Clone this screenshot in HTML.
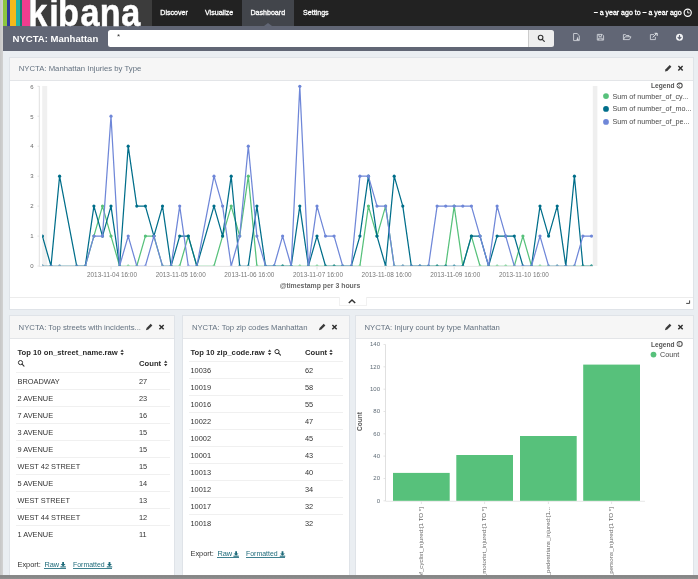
<!DOCTYPE html>
<html><head><meta charset="utf-8"><title>Kibana</title>
<style>
html,body{margin:0;padding:0;}
body{width:698px;height:579px;overflow:hidden;position:relative;background:#eaeef2;font-family:"Liberation Sans",sans-serif;color:#444;}
div{position:absolute;box-sizing:border-box;}
.panel{background:#fff;border:1px solid #dfe3e8;}
.ph{background:#f6f6f6;border-bottom:1px solid #e3e5e8;left:0;right:0;top:0;}
.pt{font-size:7.72px;color:#647280;white-space:nowrap;line-height:10px;}
.td{font-size:7.4px;line-height:10px;white-space:nowrap;color:#333;}
.th{font-size:7.66px;line-height:10px;white-space:nowrap;color:#2b2b2b;font-weight:bold;}
.ln{height:1px;background:#f0f0f0;}
.nav{font-size:7.1px;font-weight:normal;-webkit-text-stroke:0.3px #fff;color:#fff;line-height:10px;white-space:nowrap;}
svg{position:absolute;left:0;top:0;}
#wrap{left:0;top:0;width:698px;height:579px;will-change:transform;overflow:hidden;}
svg text{font-family:"Liberation Sans",sans-serif;}
a{color:#1f6b7a;text-decoration:underline;}
</style></head><body><div id="wrap">
<!-- navbar -->
<div style="left:0;top:0;width:698px;height:26px;background:#222;"></div>
<div style="left:3px;top:0;width:148.5px;height:26px;background:#3c3c3c;"></div>
<div style="left:3px;top:0;width:4px;height:26px;background:#8cc63f;"></div>
<div style="left:7px;top:0;width:3.2px;height:26px;background:#2e3a9c;"></div>
<div style="left:10.4px;top:0;width:5.2px;height:26px;background:#f5b91a;"></div>
<div style="left:15.6px;top:0;width:4.4px;height:26px;background:#25b4a4;"></div>
<div style="left:20px;top:0;width:1.8px;height:26px;background:#157a70;"></div>
<div style="left:22px;top:0;width:7.6px;height:26px;background:#ee3d8f;"></div>
<svg width="698" height="60" style="z-index:3"><g font-size="38" font-weight="bold" fill="#fff" stroke="#fff" stroke-width="0.5"><text transform="translate(28.3,25.5) scale(0.9,1)">k</text><text transform="translate(49.2,25.5) scale(0.9,1)">i</text><text transform="translate(58.1,25.5) scale(0.9,1)">b</text><text transform="translate(80.4,25.5) scale(0.9,1)">a</text><text transform="translate(99.8,25.5) scale(0.9,1)">n</text><text transform="translate(121.3,25.5) scale(0.9,1)">a</text></g></svg>
<div style="left:242.3px;top:0;width:51.8px;height:26px;background:#42454b;"></div>
<div style="left:263.7px;top:22.6px;width:0;height:0;border-left:4.1px solid transparent;border-right:4.1px solid transparent;border-bottom:3.6px solid #616675;"></div>
<div class="nav" style="left:160.3px;top:7.6px;">Discover</div>
<div class="nav" style="left:205px;top:7.6px;">Visualize</div>
<div class="nav" style="left:250.4px;top:7.6px;">Dashboard</div>
<div class="nav" style="left:303px;top:7.6px;">Settings</div>
<div class="nav" style="right:16.4px;top:7.6px;font-size:7px;">~ a year ago to ~ a year ago</div>
<svg width="698" height="60" style="z-index:3"><circle cx="687.7" cy="12.7" r="3.6" fill="none" stroke="#fff" stroke-width="1.15"/><path d="M687.7 10.5V12.9H689.6" fill="none" stroke="#fff" stroke-width="0.9"/></svg>
<!-- subnav -->
<div style="left:0;top:26px;width:698px;height:24.7px;background:#616675;"></div>
<div style="left:12.5px;top:33px;font-size:9.55px;font-weight:bold;color:#fff;line-height:12px;white-space:nowrap;">NYCTA: Manhattan</div>
<div style="left:107.5px;top:30px;width:420px;height:17.4px;background:#fff;border-radius:2.5px 0 0 2.5px;"></div>
<div style="left:117px;top:31.5px;font-size:8px;color:#333;line-height:10px;">*</div>
<div style="left:527.5px;top:30px;width:26px;height:17.4px;background:#eee;border-left:1px solid #ccc;border-radius:0 2.5px 2.5px 0;"></div>
<svg width="698" height="60" style="z-index:3">
<circle cx="540.6" cy="37.6" r="2.3" fill="none" stroke="#333" stroke-width="1.1"/><line x1="542.3" y1="39.4" x2="544.3" y2="41.4" stroke="#333" stroke-width="1.2" stroke-linecap="round"/>
<g fill="none" stroke="#d6d9df" stroke-width="0.85">
<path d="M573.6 33.5h3.5l2.2 2.2v4.9h-5.7z"/><path d="M577.6 37.4v2.6M576.5 38.9l1.1 1.1 1.1-1.1" stroke="#eceef1"/>
<path d="M597.3 34.4h4.9l1.4 1.4v4.3h-6.3z"/><path d="M598.9 34.4v2h2.6v-2M598.7 40.1v-2h3.5v2"/>
<path d="M623.4 39.6v-5h2.1l.7.9h2.8v1.3"/><path d="M623.4 39.6l1.6-2.8h6l-1.6 2.8z"/>
<path d="M654 34.6h-3.6v5h5v-2.6"/><path d="M652.8 37.4l4-4M654.6 33.3h2.6v2.6" stroke="#eceef1" stroke-width="1"/>
</g>
<circle cx="679.5" cy="37.2" r="3.5" fill="#f4f5f7"/><path d="M679.5 35v3.4M677.7 37l1.8 1.9 1.8-1.9" fill="none" stroke="#616675" stroke-width="1.1"/>
</svg>

<!-- panel 1 -->
<div class="panel" style="left:9px;top:57.3px;width:685px;height:253px;">
 <div class="ph" style="height:22.4px;"></div>
 <div class="pt" style="left:8.8px;top:5.9px;">NYCTA: Manhattan Injuries by Type</div>
 <div style="left:0;right:0;top:239px;height:1px;background:#ececec;"></div>
 <div style="left:329px;top:238.5px;width:28px;height:9px;background:#fff;border:1px solid #f1f1f1;border-top:none;"></div>
</div>
<!-- panel 2 -->
<div class="panel" style="left:9px;top:315.4px;width:166px;height:270px;">
 <div class="ph" style="height:22.4px;"></div>
 <div class="pt" style="left:8.6px;top:6.4px;">NYCTA: Top streets with incidents...</div>
</div>
<!-- panel 3 -->
<div class="panel" style="left:182.3px;top:315.4px;width:167.8px;height:270px;">
 <div class="ph" style="height:22.4px;"></div>
 <div class="pt" style="left:8.6px;top:6.4px;">NYCTA: Top zip codes Manhattan</div>
</div>
<!-- panel 4 -->
<div class="panel" style="left:354.9px;top:315.4px;width:339.2px;height:270px;">
 <div class="ph" style="height:22.4px;"></div>
 <div class="pt" style="left:8.6px;top:6.4px;">NYCTA: Injury count by type Manhattan</div>
</div>

<!-- table 1 -->
<div class="th" style="left:17.5px;top:347.7px;">Top 10 on_street_name.raw</div>
<div class="th" style="left:139px;top:358.7px;">Count</div>
<div class="ln" style="left:15.5px;width:154.5px;top:372px"></div><div class="td" style="left:17.5px;top:376.9px">BROADWAY</div><div class="td" style="left:139px;top:376.9px">27</div><div class="ln" style="left:15.5px;width:154.5px;top:389px"></div><div class="td" style="left:17.5px;top:393.9px">2 AVENUE</div><div class="td" style="left:139px;top:393.9px">23</div><div class="ln" style="left:15.5px;width:154.5px;top:406px"></div><div class="td" style="left:17.5px;top:410.9px">7 AVENUE</div><div class="td" style="left:139px;top:410.9px">16</div><div class="ln" style="left:15.5px;width:154.5px;top:423px"></div><div class="td" style="left:17.5px;top:427.9px">3 AVENUE</div><div class="td" style="left:139px;top:427.9px">15</div><div class="ln" style="left:15.5px;width:154.5px;top:440px"></div><div class="td" style="left:17.5px;top:444.9px">9 AVENUE</div><div class="td" style="left:139px;top:444.9px">15</div><div class="ln" style="left:15.5px;width:154.5px;top:457px"></div><div class="td" style="left:17.5px;top:461.9px">WEST 42 STREET</div><div class="td" style="left:139px;top:461.9px">15</div><div class="ln" style="left:15.5px;width:154.5px;top:474px"></div><div class="td" style="left:17.5px;top:478.9px">5 AVENUE</div><div class="td" style="left:139px;top:478.9px">14</div><div class="ln" style="left:15.5px;width:154.5px;top:491px"></div><div class="td" style="left:17.5px;top:495.9px">WEST STREET</div><div class="td" style="left:139px;top:495.9px">13</div><div class="ln" style="left:15.5px;width:154.5px;top:508px"></div><div class="td" style="left:17.5px;top:512.9px">WEST 44 STREET</div><div class="td" style="left:139px;top:512.9px">12</div><div class="ln" style="left:15.5px;width:154.5px;top:525px"></div><div class="td" style="left:17.5px;top:529.9px">1 AVENUE</div><div class="td" style="left:139px;top:529.9px">11</div>
<div class="td" style="left:17.5px;top:559.6px;">Export:</div><div class="td" style="left:44.4px;top:559.6px;color:#1f6b7a">Raw</div><div class="td" style="left:73.0px;top:559.6px;color:#1f6b7a;font-size:6.95px">Formatted</div><div style="left:44.4px;top:568.1px;width:21.6px;height:0.8px;background:#3f8190"></div><div style="left:73.0px;top:568.1px;width:39.2px;height:0.8px;background:#3f8190"></div><svg width="698" height="579" style="z-index:3"><path d="M62.2 561.9h1.8v2.2h1.5l-2.4 2.3l-2.4 -2.3h1.5z" fill="#1f6b7a"/><path d="M60.4 566.9h5.4" stroke="#1f6b7a" stroke-width="1.1"/><path d="M108.6 561.9h1.8v2.2h1.5l-2.4 2.3l-2.4 -2.3h1.5z" fill="#1f6b7a"/><path d="M106.8 566.9h5.4" stroke="#1f6b7a" stroke-width="1.1"/></svg>
<!-- table 2 -->
<div class="th" style="left:190.5px;top:347.7px;">Top 10 zip_code.raw</div>
<div class="th" style="left:305px;top:347.7px;">Count</div>
<div class="ln" style="left:188.5px;width:154.5px;top:361px"></div><div class="td" style="left:190.5px;top:365.9px">10036</div><div class="td" style="left:305px;top:365.9px">62</div><div class="ln" style="left:188.5px;width:154.5px;top:378px"></div><div class="td" style="left:190.5px;top:382.9px">10019</div><div class="td" style="left:305px;top:382.9px">58</div><div class="ln" style="left:188.5px;width:154.5px;top:395px"></div><div class="td" style="left:190.5px;top:399.9px">10016</div><div class="td" style="left:305px;top:399.9px">55</div><div class="ln" style="left:188.5px;width:154.5px;top:412px"></div><div class="td" style="left:190.5px;top:416.9px">10022</div><div class="td" style="left:305px;top:416.9px">47</div><div class="ln" style="left:188.5px;width:154.5px;top:429px"></div><div class="td" style="left:190.5px;top:433.9px">10002</div><div class="td" style="left:305px;top:433.9px">45</div><div class="ln" style="left:188.5px;width:154.5px;top:446px"></div><div class="td" style="left:190.5px;top:450.9px">10001</div><div class="td" style="left:305px;top:450.9px">43</div><div class="ln" style="left:188.5px;width:154.5px;top:463px"></div><div class="td" style="left:190.5px;top:467.9px">10013</div><div class="td" style="left:305px;top:467.9px">40</div><div class="ln" style="left:188.5px;width:154.5px;top:480px"></div><div class="td" style="left:190.5px;top:484.9px">10012</div><div class="td" style="left:305px;top:484.9px">34</div><div class="ln" style="left:188.5px;width:154.5px;top:497px"></div><div class="td" style="left:190.5px;top:501.9px">10017</div><div class="td" style="left:305px;top:501.9px">32</div><div class="ln" style="left:188.5px;width:154.5px;top:514px"></div><div class="td" style="left:190.5px;top:518.9px">10018</div><div class="td" style="left:305px;top:518.9px">32</div>
<div class="td" style="left:190.5px;top:548.9px;">Export:</div><div class="td" style="left:217.4px;top:548.9px;color:#1f6b7a">Raw</div><div class="td" style="left:246.0px;top:548.9px;color:#1f6b7a;font-size:6.95px">Formatted</div><div style="left:217.4px;top:557.4px;width:21.6px;height:0.8px;background:#3f8190"></div><div style="left:246.0px;top:557.4px;width:39.2px;height:0.8px;background:#3f8190"></div><svg width="698" height="579" style="z-index:3"><path d="M235.2 551.2h1.8v2.2h1.5l-2.4 2.3l-2.4 -2.3h1.5z" fill="#1f6b7a"/><path d="M233.4 556.2h5.4" stroke="#1f6b7a" stroke-width="1.1"/><path d="M281.6 551.2h1.8v2.2h1.5l-2.4 2.3l-2.4 -2.3h1.5z" fill="#1f6b7a"/><path d="M279.8 556.2h5.4" stroke="#1f6b7a" stroke-width="1.1"/></svg>

<svg width="698" height="579" style="z-index:2">
<!-- line chart -->
<rect x="42.2" y="86" width="5" height="180" fill="#f0f0f0"/>
<rect x="592.8" y="86" width="4.6" height="180" fill="#efefef"/>
<line x1="39.3" x2="39.3" y1="86" y2="266.5" stroke="#ddd" stroke-width="0.9"/>
<line x1="39.3" x2="593" y1="266.4" y2="266.4" stroke="#e2e2e2" stroke-width="0.9"/>
<line x1="37.5" x2="39.3" y1="266.0" y2="266.0" stroke="#ddd" stroke-width="0.8"/><line x1="37.5" x2="39.3" y1="236.1" y2="236.1" stroke="#ddd" stroke-width="0.8"/><line x1="37.5" x2="39.3" y1="206.1" y2="206.1" stroke="#ddd" stroke-width="0.8"/><line x1="37.5" x2="39.3" y1="176.2" y2="176.2" stroke="#ddd" stroke-width="0.8"/><line x1="37.5" x2="39.3" y1="146.2" y2="146.2" stroke="#ddd" stroke-width="0.8"/><line x1="37.5" x2="39.3" y1="116.2" y2="116.2" stroke="#ddd" stroke-width="0.8"/><line x1="37.5" x2="39.3" y1="86.3" y2="86.3" stroke="#ddd" stroke-width="0.8"/>
<g font-size="6" fill="#6a6a6a"><text x="33.6" y="268.2" text-anchor="end">0</text><text x="33.6" y="238.2" text-anchor="end">1</text><text x="33.6" y="208.3" text-anchor="end">2</text><text x="33.6" y="178.3" text-anchor="end">3</text><text x="33.6" y="148.4" text-anchor="end">4</text><text x="33.6" y="118.5" text-anchor="end">5</text><text x="33.6" y="88.5" text-anchor="end">6</text></g>
<g font-size="6.4" fill="#777"><text x="112.0" y="277" text-anchor="middle">2013-11-04 16:00</text><line x1="111.0" x2="111.0" y1="267" y2="269.5" stroke="#ddd" stroke-width="0.8"/><text x="180.7" y="277" text-anchor="middle">2013-11-05 16:00</text><line x1="179.7" x2="179.7" y1="267" y2="269.5" stroke="#ddd" stroke-width="0.8"/><text x="249.3" y="277" text-anchor="middle">2013-11-06 16:00</text><line x1="248.3" x2="248.3" y1="267" y2="269.5" stroke="#ddd" stroke-width="0.8"/><text x="318.0" y="277" text-anchor="middle">2013-11-07 16:00</text><line x1="317.0" x2="317.0" y1="267" y2="269.5" stroke="#ddd" stroke-width="0.8"/><text x="386.6" y="277" text-anchor="middle">2013-11-08 16:00</text><line x1="385.6" x2="385.6" y1="267" y2="269.5" stroke="#ddd" stroke-width="0.8"/><text x="455.2" y="277" text-anchor="middle">2013-11-09 16:00</text><line x1="454.2" x2="454.2" y1="267" y2="269.5" stroke="#ddd" stroke-width="0.8"/><text x="523.9" y="277" text-anchor="middle">2013-11-10 16:00</text><line x1="522.9" x2="522.9" y1="267" y2="269.5" stroke="#ddd" stroke-width="0.8"/></g>
<text x="320" y="288" font-size="6.9" font-weight="bold" fill="#686868" text-anchor="middle">@timestamp per 3 hours</text>
<clipPath id="cc"><rect x="42.2" y="80" width="551" height="185.6"/></clipPath><g clip-path="url(#cc)"><path d="M42.4,266.0 L51.0,266.0 L59.6,266.0 L76.7,266.0 L85.3,266.0 L93.9,236.1 L102.5,206.1 L111.0,236.1 L119.6,266.0 L128.2,266.0 L136.8,266.0 L145.4,236.1 L153.9,236.1 L162.5,266.0 L171.1,266.0 L179.7,266.0 L188.3,236.1 L196.8,266.0 L214.0,266.0 L222.6,236.1 L231.2,206.1 L239.7,236.1 L248.3,176.2 L256.9,266.0 L265.5,266.0 L274.1,266.0 L282.6,266.0 L291.2,266.0 L299.8,266.0 L308.4,266.0 L317.0,266.0 L325.5,266.0 L334.1,266.0 L342.7,266.0 L351.3,266.0 L359.9,266.0 L368.4,206.1 L377.0,236.1 L385.6,206.1 L394.2,266.0 L402.8,266.0 L411.3,266.0 L419.9,266.0 L428.5,266.0 L437.1,266.0 L445.7,266.0 L454.2,206.1 L462.8,266.0 L471.4,236.1 L480.0,266.0 L488.6,266.0 L497.1,266.0 L505.7,266.0 L514.3,266.0 L522.9,236.1 L531.5,266.0 L540.0,266.0 L548.6,266.0 L557.2,266.0 L565.8,266.0 L574.4,266.0 L582.9,266.0 L591.5,266.0" fill="none" stroke="#57c17b" stroke-width="1.25" stroke-linejoin="round"/><circle cx="42.4" cy="266.0" r="1.5" fill="#57c17b"/><circle cx="51.0" cy="266.0" r="1.5" fill="#57c17b"/><circle cx="59.6" cy="266.0" r="1.5" fill="#57c17b"/><circle cx="76.7" cy="266.0" r="1.5" fill="#57c17b"/><circle cx="85.3" cy="266.0" r="1.5" fill="#57c17b"/><circle cx="93.9" cy="236.1" r="1.6" fill="#57c17b"/><circle cx="102.5" cy="206.1" r="1.6" fill="#57c17b"/><circle cx="111.0" cy="236.1" r="1.6" fill="#57c17b"/><circle cx="119.6" cy="266.0" r="1.5" fill="#57c17b"/><circle cx="128.2" cy="266.0" r="1.5" fill="#57c17b"/><circle cx="136.8" cy="266.0" r="1.5" fill="#57c17b"/><circle cx="145.4" cy="236.1" r="1.6" fill="#57c17b"/><circle cx="153.9" cy="236.1" r="1.6" fill="#57c17b"/><circle cx="162.5" cy="266.0" r="1.5" fill="#57c17b"/><circle cx="171.1" cy="266.0" r="1.5" fill="#57c17b"/><circle cx="179.7" cy="266.0" r="1.5" fill="#57c17b"/><circle cx="188.3" cy="236.1" r="1.6" fill="#57c17b"/><circle cx="196.8" cy="266.0" r="1.5" fill="#57c17b"/><circle cx="214.0" cy="266.0" r="1.5" fill="#57c17b"/><circle cx="222.6" cy="236.1" r="1.6" fill="#57c17b"/><circle cx="231.2" cy="206.1" r="1.6" fill="#57c17b"/><circle cx="239.7" cy="236.1" r="1.6" fill="#57c17b"/><circle cx="248.3" cy="176.2" r="1.6" fill="#57c17b"/><circle cx="256.9" cy="266.0" r="1.5" fill="#57c17b"/><circle cx="265.5" cy="266.0" r="1.5" fill="#57c17b"/><circle cx="274.1" cy="266.0" r="1.5" fill="#57c17b"/><circle cx="282.6" cy="266.0" r="1.5" fill="#57c17b"/><circle cx="291.2" cy="266.0" r="1.5" fill="#57c17b"/><circle cx="299.8" cy="266.0" r="1.5" fill="#57c17b"/><circle cx="308.4" cy="266.0" r="1.5" fill="#57c17b"/><circle cx="317.0" cy="266.0" r="1.5" fill="#57c17b"/><circle cx="325.5" cy="266.0" r="1.5" fill="#57c17b"/><circle cx="334.1" cy="266.0" r="1.5" fill="#57c17b"/><circle cx="342.7" cy="266.0" r="1.5" fill="#57c17b"/><circle cx="351.3" cy="266.0" r="1.5" fill="#57c17b"/><circle cx="359.9" cy="266.0" r="1.5" fill="#57c17b"/><circle cx="368.4" cy="206.1" r="1.6" fill="#57c17b"/><circle cx="377.0" cy="236.1" r="1.6" fill="#57c17b"/><circle cx="385.6" cy="206.1" r="1.6" fill="#57c17b"/><circle cx="394.2" cy="266.0" r="1.5" fill="#57c17b"/><circle cx="402.8" cy="266.0" r="1.5" fill="#57c17b"/><circle cx="411.3" cy="266.0" r="1.5" fill="#57c17b"/><circle cx="419.9" cy="266.0" r="1.5" fill="#57c17b"/><circle cx="428.5" cy="266.0" r="1.5" fill="#57c17b"/><circle cx="437.1" cy="266.0" r="1.5" fill="#57c17b"/><circle cx="445.7" cy="266.0" r="1.5" fill="#57c17b"/><circle cx="454.2" cy="206.1" r="1.6" fill="#57c17b"/><circle cx="462.8" cy="266.0" r="1.5" fill="#57c17b"/><circle cx="471.4" cy="236.1" r="1.6" fill="#57c17b"/><circle cx="480.0" cy="266.0" r="1.5" fill="#57c17b"/><circle cx="488.6" cy="266.0" r="1.5" fill="#57c17b"/><circle cx="497.1" cy="266.0" r="1.5" fill="#57c17b"/><circle cx="505.7" cy="266.0" r="1.5" fill="#57c17b"/><circle cx="514.3" cy="266.0" r="1.5" fill="#57c17b"/><circle cx="522.9" cy="236.1" r="1.6" fill="#57c17b"/><circle cx="531.5" cy="266.0" r="1.5" fill="#57c17b"/><circle cx="540.0" cy="266.0" r="1.5" fill="#57c17b"/><circle cx="548.6" cy="266.0" r="1.5" fill="#57c17b"/><circle cx="557.2" cy="266.0" r="1.5" fill="#57c17b"/><circle cx="565.8" cy="266.0" r="1.5" fill="#57c17b"/><circle cx="574.4" cy="266.0" r="1.5" fill="#57c17b"/><circle cx="582.9" cy="266.0" r="1.5" fill="#57c17b"/><circle cx="591.5" cy="266.0" r="1.5" fill="#57c17b"/><path d="M42.4,236.1 L51.0,266.0 L59.6,176.2 L76.7,266.0 L85.3,266.0 L93.9,206.1 L102.5,236.1 L111.0,206.1 L119.6,266.0 L128.2,146.2 L136.8,206.1 L145.4,206.1 L153.9,236.1 L162.5,206.1 L171.1,266.0 L179.7,236.1 L188.3,236.1 L196.8,266.0 L214.0,206.1 L222.6,236.1 L231.2,176.2 L239.7,266.0 L248.3,266.0 L256.9,206.1 L265.5,266.0 L274.1,266.0 L282.6,266.0 L291.2,266.0 L299.8,206.1 L308.4,266.0 L317.0,236.1 L325.5,266.0 L334.1,266.0 L342.7,266.0 L351.3,266.0 L359.9,236.1 L368.4,176.2 L377.0,236.1 L385.6,266.0 L394.2,176.2 L402.8,206.1 L411.3,266.0 L419.9,266.0 L428.5,266.0 L437.1,266.0 L445.7,266.0 L454.2,266.0 L462.8,266.0 L471.4,236.1 L480.0,236.1 L488.6,266.0 L497.1,236.1 L505.7,236.1 L514.3,236.1 L522.9,266.0 L531.5,266.0 L540.0,206.1 L548.6,236.1 L557.2,206.1 L565.8,266.0 L574.4,176.2 L582.9,266.0 L591.5,266.0" fill="none" stroke="#006e8a" stroke-width="1.25" stroke-linejoin="round"/><circle cx="42.4" cy="236.1" r="1.6" fill="#006e8a"/><circle cx="51.0" cy="266.0" r="1.5" fill="#006e8a"/><circle cx="59.6" cy="176.2" r="1.6" fill="#006e8a"/><circle cx="76.7" cy="266.0" r="1.5" fill="#006e8a"/><circle cx="85.3" cy="266.0" r="1.5" fill="#006e8a"/><circle cx="93.9" cy="206.1" r="1.6" fill="#006e8a"/><circle cx="102.5" cy="236.1" r="1.6" fill="#006e8a"/><circle cx="111.0" cy="206.1" r="1.6" fill="#006e8a"/><circle cx="119.6" cy="266.0" r="1.5" fill="#006e8a"/><circle cx="128.2" cy="146.2" r="1.6" fill="#006e8a"/><circle cx="136.8" cy="206.1" r="1.6" fill="#006e8a"/><circle cx="145.4" cy="206.1" r="1.6" fill="#006e8a"/><circle cx="153.9" cy="236.1" r="1.6" fill="#006e8a"/><circle cx="162.5" cy="206.1" r="1.6" fill="#006e8a"/><circle cx="171.1" cy="266.0" r="1.5" fill="#006e8a"/><circle cx="179.7" cy="236.1" r="1.6" fill="#006e8a"/><circle cx="188.3" cy="236.1" r="1.6" fill="#006e8a"/><circle cx="196.8" cy="266.0" r="1.5" fill="#006e8a"/><circle cx="214.0" cy="206.1" r="1.6" fill="#006e8a"/><circle cx="222.6" cy="236.1" r="1.6" fill="#006e8a"/><circle cx="231.2" cy="176.2" r="1.6" fill="#006e8a"/><circle cx="239.7" cy="266.0" r="1.5" fill="#006e8a"/><circle cx="248.3" cy="266.0" r="1.5" fill="#006e8a"/><circle cx="256.9" cy="206.1" r="1.6" fill="#006e8a"/><circle cx="265.5" cy="266.0" r="1.5" fill="#006e8a"/><circle cx="274.1" cy="266.0" r="1.5" fill="#006e8a"/><circle cx="282.6" cy="266.0" r="1.5" fill="#006e8a"/><circle cx="291.2" cy="266.0" r="1.5" fill="#006e8a"/><circle cx="299.8" cy="206.1" r="1.6" fill="#006e8a"/><circle cx="308.4" cy="266.0" r="1.5" fill="#006e8a"/><circle cx="317.0" cy="236.1" r="1.6" fill="#006e8a"/><circle cx="325.5" cy="266.0" r="1.5" fill="#006e8a"/><circle cx="334.1" cy="266.0" r="1.5" fill="#006e8a"/><circle cx="342.7" cy="266.0" r="1.5" fill="#006e8a"/><circle cx="351.3" cy="266.0" r="1.5" fill="#006e8a"/><circle cx="359.9" cy="236.1" r="1.6" fill="#006e8a"/><circle cx="368.4" cy="176.2" r="1.6" fill="#006e8a"/><circle cx="377.0" cy="236.1" r="1.6" fill="#006e8a"/><circle cx="385.6" cy="266.0" r="1.5" fill="#006e8a"/><circle cx="394.2" cy="176.2" r="1.6" fill="#006e8a"/><circle cx="402.8" cy="206.1" r="1.6" fill="#006e8a"/><circle cx="411.3" cy="266.0" r="1.5" fill="#006e8a"/><circle cx="419.9" cy="266.0" r="1.5" fill="#006e8a"/><circle cx="428.5" cy="266.0" r="1.5" fill="#006e8a"/><circle cx="437.1" cy="266.0" r="1.5" fill="#006e8a"/><circle cx="445.7" cy="266.0" r="1.5" fill="#006e8a"/><circle cx="454.2" cy="266.0" r="1.5" fill="#006e8a"/><circle cx="462.8" cy="266.0" r="1.5" fill="#006e8a"/><circle cx="471.4" cy="236.1" r="1.6" fill="#006e8a"/><circle cx="480.0" cy="236.1" r="1.6" fill="#006e8a"/><circle cx="488.6" cy="266.0" r="1.5" fill="#006e8a"/><circle cx="497.1" cy="236.1" r="1.6" fill="#006e8a"/><circle cx="505.7" cy="236.1" r="1.6" fill="#006e8a"/><circle cx="514.3" cy="236.1" r="1.6" fill="#006e8a"/><circle cx="522.9" cy="266.0" r="1.5" fill="#006e8a"/><circle cx="531.5" cy="266.0" r="1.5" fill="#006e8a"/><circle cx="540.0" cy="206.1" r="1.6" fill="#006e8a"/><circle cx="548.6" cy="236.1" r="1.6" fill="#006e8a"/><circle cx="557.2" cy="206.1" r="1.6" fill="#006e8a"/><circle cx="565.8" cy="266.0" r="1.5" fill="#006e8a"/><circle cx="574.4" cy="176.2" r="1.6" fill="#006e8a"/><circle cx="582.9" cy="266.0" r="1.5" fill="#006e8a"/><circle cx="591.5" cy="266.0" r="1.5" fill="#006e8a"/><path d="M42.4,266.0 L51.0,266.0 L59.6,266.0 L76.7,266.0 L85.3,266.0 L93.9,236.1 L102.5,236.1 L111.0,116.2 L119.6,266.0 L128.2,236.1 L136.8,266.0 L145.4,266.0 L153.9,236.1 L162.5,266.0 L171.1,266.0 L179.7,206.1 L188.3,266.0 L196.8,266.0 L214.0,176.2 L222.6,206.1 L231.2,266.0 L239.7,236.1 L248.3,146.2 L256.9,236.1 L265.5,266.0 L274.1,266.0 L282.6,236.1 L291.2,266.0 L299.8,86.3 L308.4,266.0 L317.0,206.1 L325.5,236.1 L334.1,236.1 L342.7,266.0 L351.3,266.0 L359.9,176.2 L368.4,176.2 L377.0,206.1 L385.6,206.1 L394.2,266.0 L402.8,266.0 L411.3,266.0 L419.9,266.0 L428.5,266.0 L437.1,206.1 L445.7,206.1 L454.2,206.1 L462.8,206.1 L471.4,206.1 L480.0,236.1 L488.6,266.0 L497.1,206.1 L505.7,236.1 L514.3,266.0 L522.9,266.0 L531.5,266.0 L540.0,236.1 L548.6,266.0 L557.2,266.0 L565.8,266.0 L574.4,266.0 L582.9,236.1 L591.5,236.1" fill="none" stroke="#6f87d8" stroke-width="1.25" stroke-linejoin="round"/><circle cx="42.4" cy="266.0" r="1.5" fill="#6f87d8"/><circle cx="51.0" cy="266.0" r="1.5" fill="#6f87d8"/><circle cx="59.6" cy="266.0" r="1.5" fill="#6f87d8"/><circle cx="76.7" cy="266.0" r="1.5" fill="#6f87d8"/><circle cx="85.3" cy="266.0" r="1.5" fill="#6f87d8"/><circle cx="93.9" cy="236.1" r="1.6" fill="#6f87d8"/><circle cx="102.5" cy="236.1" r="1.6" fill="#6f87d8"/><circle cx="111.0" cy="116.2" r="1.6" fill="#6f87d8"/><circle cx="119.6" cy="266.0" r="1.5" fill="#6f87d8"/><circle cx="128.2" cy="236.1" r="1.6" fill="#6f87d8"/><circle cx="136.8" cy="266.0" r="1.5" fill="#6f87d8"/><circle cx="145.4" cy="266.0" r="1.5" fill="#6f87d8"/><circle cx="153.9" cy="236.1" r="1.6" fill="#6f87d8"/><circle cx="162.5" cy="266.0" r="1.5" fill="#6f87d8"/><circle cx="171.1" cy="266.0" r="1.5" fill="#6f87d8"/><circle cx="179.7" cy="206.1" r="1.6" fill="#6f87d8"/><circle cx="188.3" cy="266.0" r="1.5" fill="#6f87d8"/><circle cx="196.8" cy="266.0" r="1.5" fill="#6f87d8"/><circle cx="214.0" cy="176.2" r="1.6" fill="#6f87d8"/><circle cx="222.6" cy="206.1" r="1.6" fill="#6f87d8"/><circle cx="231.2" cy="266.0" r="1.5" fill="#6f87d8"/><circle cx="239.7" cy="236.1" r="1.6" fill="#6f87d8"/><circle cx="248.3" cy="146.2" r="1.6" fill="#6f87d8"/><circle cx="256.9" cy="236.1" r="1.6" fill="#6f87d8"/><circle cx="265.5" cy="266.0" r="1.5" fill="#6f87d8"/><circle cx="274.1" cy="266.0" r="1.5" fill="#6f87d8"/><circle cx="282.6" cy="236.1" r="1.6" fill="#6f87d8"/><circle cx="291.2" cy="266.0" r="1.5" fill="#6f87d8"/><circle cx="299.8" cy="86.3" r="1.6" fill="#6f87d8"/><circle cx="308.4" cy="266.0" r="1.5" fill="#6f87d8"/><circle cx="317.0" cy="206.1" r="1.6" fill="#6f87d8"/><circle cx="325.5" cy="236.1" r="1.6" fill="#6f87d8"/><circle cx="334.1" cy="236.1" r="1.6" fill="#6f87d8"/><circle cx="342.7" cy="266.0" r="1.5" fill="#6f87d8"/><circle cx="351.3" cy="266.0" r="1.5" fill="#6f87d8"/><circle cx="359.9" cy="176.2" r="1.6" fill="#6f87d8"/><circle cx="368.4" cy="176.2" r="1.6" fill="#6f87d8"/><circle cx="377.0" cy="206.1" r="1.6" fill="#6f87d8"/><circle cx="385.6" cy="206.1" r="1.6" fill="#6f87d8"/><circle cx="394.2" cy="266.0" r="1.5" fill="#6f87d8"/><circle cx="402.8" cy="266.0" r="1.5" fill="#6f87d8"/><circle cx="411.3" cy="266.0" r="1.5" fill="#6f87d8"/><circle cx="419.9" cy="266.0" r="1.5" fill="#6f87d8"/><circle cx="428.5" cy="266.0" r="1.5" fill="#6f87d8"/><circle cx="437.1" cy="206.1" r="1.6" fill="#6f87d8"/><circle cx="445.7" cy="206.1" r="1.6" fill="#6f87d8"/><circle cx="454.2" cy="206.1" r="1.6" fill="#6f87d8"/><circle cx="462.8" cy="206.1" r="1.6" fill="#6f87d8"/><circle cx="471.4" cy="206.1" r="1.6" fill="#6f87d8"/><circle cx="480.0" cy="236.1" r="1.6" fill="#6f87d8"/><circle cx="488.6" cy="266.0" r="1.5" fill="#6f87d8"/><circle cx="497.1" cy="206.1" r="1.6" fill="#6f87d8"/><circle cx="505.7" cy="236.1" r="1.6" fill="#6f87d8"/><circle cx="514.3" cy="266.0" r="1.5" fill="#6f87d8"/><circle cx="522.9" cy="266.0" r="1.5" fill="#6f87d8"/><circle cx="531.5" cy="266.0" r="1.5" fill="#6f87d8"/><circle cx="540.0" cy="236.1" r="1.6" fill="#6f87d8"/><circle cx="548.6" cy="266.0" r="1.5" fill="#6f87d8"/><circle cx="557.2" cy="266.0" r="1.5" fill="#6f87d8"/><circle cx="565.8" cy="266.0" r="1.5" fill="#6f87d8"/><circle cx="574.4" cy="266.0" r="1.5" fill="#6f87d8"/><circle cx="582.9" cy="236.1" r="1.6" fill="#6f87d8"/><circle cx="591.5" cy="236.1" r="1.6" fill="#6f87d8"/></g>
<path d="M348.8 303l3.2-3 3.2 3" fill="none" stroke="#333" stroke-width="1.5"/>
<path d="M686.2 303.4h3.4v-3" fill="none" stroke="#444" stroke-width="1"/>
<!-- legend 1 -->
<text x="674.5" y="88" font-size="6.6" font-weight="bold" fill="#555" text-anchor="end">Legend</text>
<circle cx="679.7" cy="85.6" r="2.5" fill="none" stroke="#555" stroke-width="1.1"/><path d="M679.7 85.6h-2.6" stroke="#fff" stroke-width="1.1"/><path d="M679.9 84.3l-1.4 1.3 1.4 1.3" fill="none" stroke="#555" stroke-width="0.7"/>
<g font-size="7.2" fill="#484848">
<circle cx="606" cy="96.1" r="2.9" fill="#57c17b"/><text x="612.4" y="98.6">Sum of number_of_cy...</text>
<circle cx="606" cy="108.9" r="2.9" fill="#006e8a"/><text x="612.4" y="111.4">Sum of number_of_mo...</text>
<circle cx="606" cy="121.9" r="2.9" fill="#6f87d8"/><text x="612.4" y="124.4">Sum of number_of_pe...</text>
</g>
<path d="M120.4 351.7l1.7 -2.3l1.7 2.3zM120.4 352.9l1.7 2.3l1.7 -2.3z" fill="#333"/><circle cx="20.5" cy="362.6" r="2.1" fill="none" stroke="#333" stroke-width="1"/><path d="M22.1 364.2l1.9 1.9" stroke="#333" stroke-width="1.1" stroke-linecap="round"/><path d="M164.0 362.7l1.7 -2.3l1.7 2.3zM164.0 363.9l1.7 2.3l1.7 -2.3z" fill="#333"/><path d="M267.9 351.7l1.7 -2.3l1.7 2.3zM267.9 352.9l1.7 2.3l1.7 -2.3z" fill="#333"/><circle cx="277.0" cy="351.6" r="2.1" fill="none" stroke="#333" stroke-width="1"/><path d="M278.6 353.2l1.9 1.9" stroke="#333" stroke-width="1.1" stroke-linecap="round"/><path d="M329.3 351.7l1.7 -2.3l1.7 2.3zM329.3 352.9l1.7 2.3l1.7 -2.3z" fill="#333"/>
<!-- panel icons -->
<path d="M664.9 71.5l0.7 -2.3l4.1 -4.1l1.7 1.7l-4.1 4.1z" fill="#3a3a3a"/><path d="M678.4 66.1l4.3 4.3M682.6 66.1l-4.3 4.3" stroke="#303030" stroke-width="1.45"/><path d="M145.9 330.2l0.7 -2.3l4.1 -4.1l1.7 1.7l-4.1 4.1z" fill="#3a3a3a"/><path d="M159.4 324.9l4.3 4.3M163.7 324.9l-4.3 4.3" stroke="#303030" stroke-width="1.45"/><path d="M318.9 330.2l0.7 -2.3l4.1 -4.1l1.7 1.7l-4.1 4.1z" fill="#3a3a3a"/><path d="M332.4 324.9l4.3 4.3M336.6 324.9l-4.3 4.3" stroke="#303030" stroke-width="1.45"/><path d="M664.9 330.2l0.7 -2.3l4.1 -4.1l1.7 1.7l-4.1 4.1z" fill="#3a3a3a"/><path d="M678.4 324.9l4.3 4.3M682.6 324.9l-4.3 4.3" stroke="#303030" stroke-width="1.45"/>
<!-- bar chart -->
<line x1="385.5" x2="385.5" y1="344.5" y2="501" stroke="#ddd" stroke-width="0.9"/>
<line x1="385.5" x2="645" y1="501.3" y2="501.3" stroke="#e4e4e4" stroke-width="0.9"/>
<g font-size="6" fill="#5f6b76"><text x="380" y="502.6" text-anchor="end">0</text><line x1="383.5" x2="385.5" y1="500.8" y2="500.8" stroke="#ddd" stroke-width="0.8"/><text x="380" y="480.3" text-anchor="end">20</text><line x1="383.5" x2="385.5" y1="478.5" y2="478.5" stroke="#ddd" stroke-width="0.8"/><text x="380" y="457.9" text-anchor="end">40</text><line x1="383.5" x2="385.5" y1="456.1" y2="456.1" stroke="#ddd" stroke-width="0.8"/><text x="380" y="435.6" text-anchor="end">60</text><line x1="383.5" x2="385.5" y1="433.8" y2="433.8" stroke="#ddd" stroke-width="0.8"/><text x="380" y="413.3" text-anchor="end">80</text><line x1="383.5" x2="385.5" y1="411.5" y2="411.5" stroke="#ddd" stroke-width="0.8"/><text x="380" y="391.0" text-anchor="end">100</text><line x1="383.5" x2="385.5" y1="389.2" y2="389.2" stroke="#ddd" stroke-width="0.8"/><text x="380" y="368.6" text-anchor="end">120</text><line x1="383.5" x2="385.5" y1="366.8" y2="366.8" stroke="#ddd" stroke-width="0.8"/><text x="380" y="346.3" text-anchor="end">140</text><line x1="383.5" x2="385.5" y1="344.5" y2="344.5" stroke="#ddd" stroke-width="0.8"/></g>
<rect x="393" y="472.9" width="56.7" height="27.9" fill="#57c17b"/><rect x="456.3" y="455.0" width="56.7" height="45.8" fill="#57c17b"/><rect x="520" y="436.0" width="56.7" height="64.8" fill="#57c17b"/><rect x="583.2" y="364.6" width="56.8" height="136.2" fill="#57c17b"/>
<g font-size="6.2" fill="#666"><line x1="421.4" x2="421.4" y1="501.5" y2="504" stroke="#ddd" stroke-width="0.8"/><text transform="translate(422.8,507) rotate(-90)" text-anchor="end">number_of_cyclist_injured:[1 TO *]</text><line x1="484.6" x2="484.6" y1="501.5" y2="504" stroke="#ddd" stroke-width="0.8"/><text transform="translate(486.0,507) rotate(-90)" text-anchor="end">number_of_motorist_injured:[1 TO *]</text><line x1="548.4" x2="548.4" y1="501.5" y2="504" stroke="#ddd" stroke-width="0.8"/><text transform="translate(549.8,507) rotate(-90)" text-anchor="end">number_of_pedestrians_injured:[1...</text><line x1="611.6" x2="611.6" y1="501.5" y2="504" stroke="#ddd" stroke-width="0.8"/><text transform="translate(613.0,507) rotate(-90)" text-anchor="end">number_of_persons_injured:[1 TO *]</text></g>
<text transform="translate(362.3,421.5) rotate(-90)" font-size="6.6" font-weight="bold" fill="#5c5c5c" text-anchor="middle">Count</text>
<text x="674.5" y="346.5" font-size="6.6" font-weight="bold" fill="#555" text-anchor="end">Legend</text>
<circle cx="679.7" cy="344" r="2.5" fill="none" stroke="#555" stroke-width="1.1"/><path d="M679.7 344h-2.6" stroke="#fff" stroke-width="1.1"/><path d="M679.9 342.7l-1.4 1.3 1.4 1.3" fill="none" stroke="#555" stroke-width="0.7"/>
<circle cx="653.5" cy="354.6" r="2.9" fill="#57c17b"/><text x="660" y="357.2" font-size="7.2" fill="#484848">Count</text>
</svg>

<!-- frame shadows -->
<div style="left:0;top:0;width:3px;height:579px;background:linear-gradient(90deg,#c6c6c6,#d2d2d2);z-index:5;"></div>
<div style="left:0;top:575px;width:698px;height:4px;background:linear-gradient(180deg,#8a8a8a 0%,#858585 30%,#8f8f8f 100%);z-index:6;"></div>
</div></body></html>
